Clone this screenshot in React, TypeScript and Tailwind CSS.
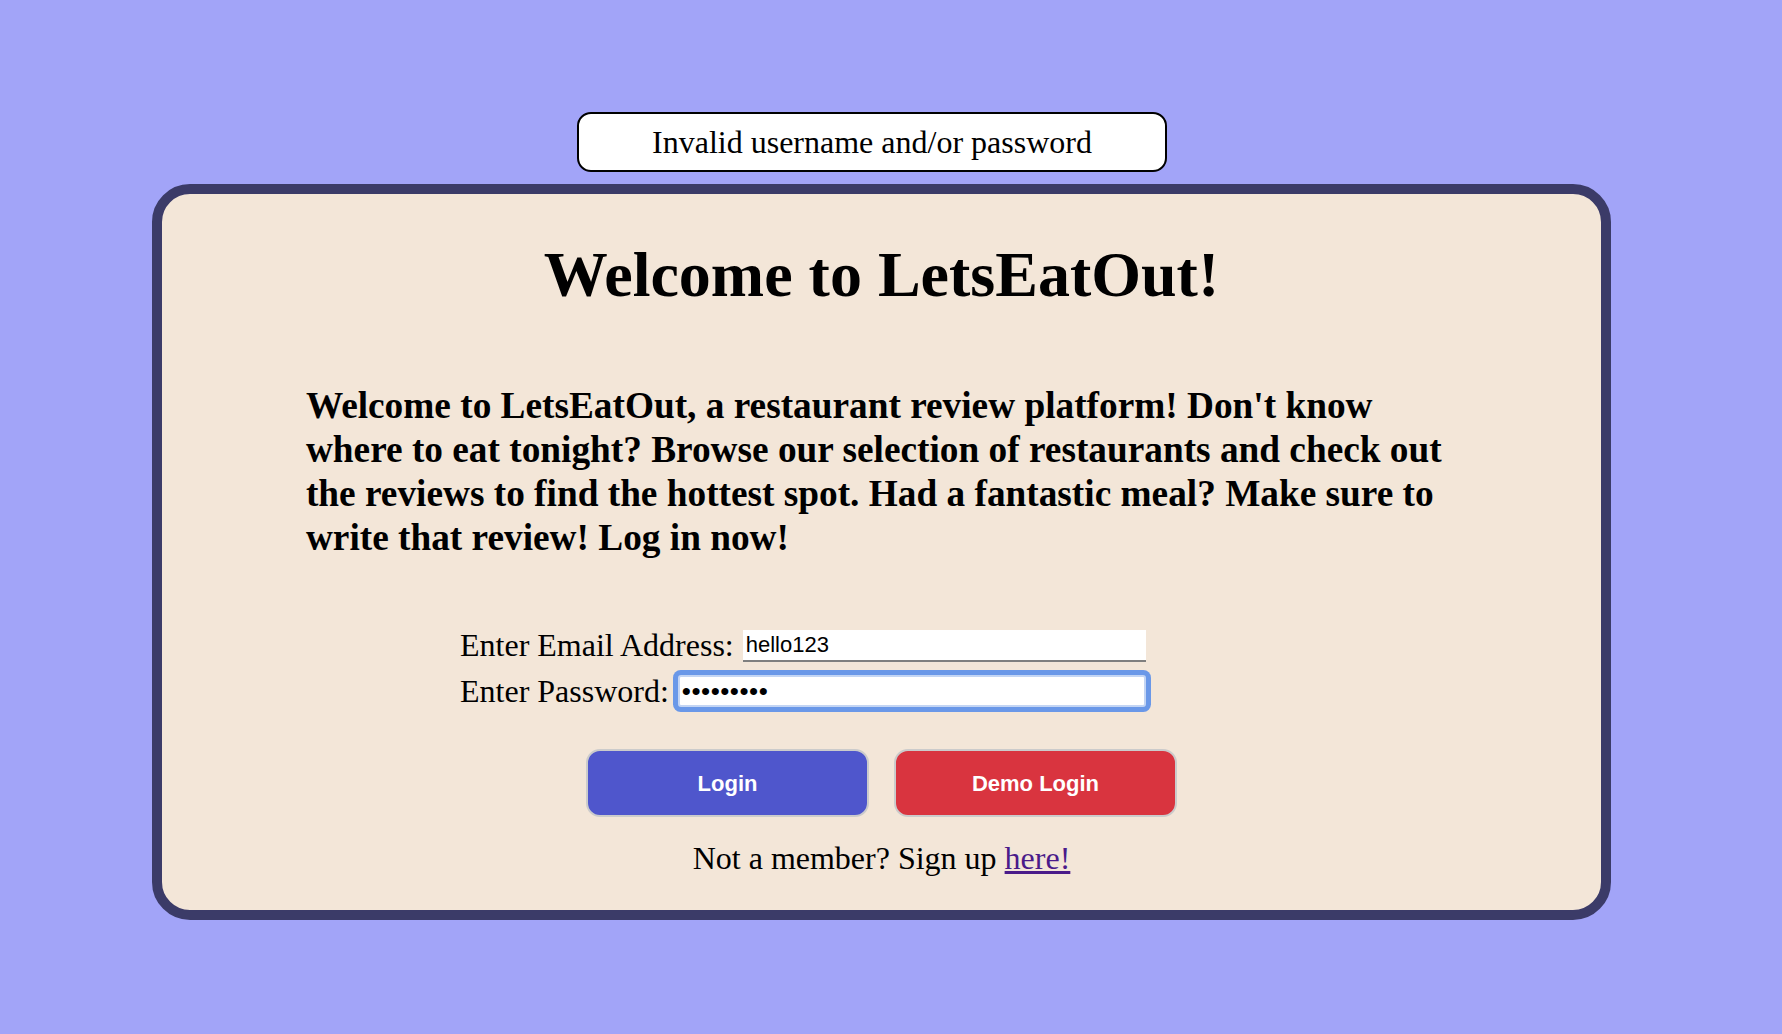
import React from 'react';

const serif = "font-['Liberation_Serif','Times_New_Roman',serif]";
const sans = "font-['Liberation_Sans',Arial,sans-serif]";

const App = () => {
  const [email, setEmail] = React.useState("hello123");
  const [password, setPassword] = React.useState("123456789");

  return (
    <div className={`min-h-screen w-full bg-[#a2a4f8] text-black ${serif}`}>
      <div className="flex flex-col items-center w-[1763px] pt-[112px] pb-[116px]">
        <div className="flex items-center justify-center w-[590px] h-[60px] mr-[19px] bg-white border-2 border-black rounded-[14px] text-[32px] leading-[37px]">
          Invalid username and/or password
        </div>

        <div className="flex flex-col w-[1459px] mt-[12px] bg-[#f3e6d8] border-[10px] border-[#3b3b68] rounded-[38px]">
          <h1 className="mt-[44px] text-center text-[64px] leading-[74px] font-bold">
            Welcome to LetsEatOut!
          </h1>

          <p className="w-[80%] mx-auto mt-[72px] text-[37.3px] leading-[44px] font-bold">
            Welcome to LetsEatOut, a restaurant review platform! Don't know
            where to eat tonight? Browse our selection of restaurants and check
            out the reviews to find the hottest spot. Had a fantastic meal? Make
            sure to write that review! Log in now!
          </p>

          <form
            className="flex flex-col gap-[7px] w-[686px] ml-[298px] mt-[67px]"
            onSubmit={(e) => e.preventDefault()}
          >
            <label className="flex items-center h-[37px] text-[32px] leading-[37px]">
              <span>Enter Email Address:</span>
              <input
                type="text"
                value={email}
                onChange={(e) => setEmail(e.target.value)}
                className={`flex-1 ml-[9px] h-[32px] px-[3px] bg-white border-b-2 border-[#7f7f7f] outline-none text-[22px] leading-[30px] ${sans}`}
              />
            </label>
            <label className="flex items-center h-[40px] text-[32px] leading-[37px]">
              <span>Enter Password:</span>
              <input
                type="password"
                value={password}
                autoFocus
                onChange={(e) => setPassword(e.target.value)}
                className={`flex-1 ml-[9px] h-[32px] px-[2px] bg-white border-2 border-[#c3d5f4] rounded-[3px] outline-none ring-[5px] ring-[#6a98e8] text-[26px] tracking-[0.5px] ${sans}`}
              />
            </label>
          </form>

          <div className="flex justify-center gap-[25px] mt-[38px]">
            <button
              type="button"
              className={`w-[283px] h-[68px] bg-[#4f56cc] border-2 border-[#cbcbcb] rounded-[14px] text-white text-[22px] font-bold ${sans}`}
            >
              Login
            </button>
            <button
              type="button"
              className={`w-[283px] h-[68px] bg-[#d9343f] border-2 border-[#cbcbcb] rounded-[14px] text-white text-[22px] font-bold ${sans}`}
            >
              Demo Login
            </button>
          </div>

          <div className="mt-[23px] mb-[33px] text-center text-[32px] leading-[37px]">
            Not a member? Sign up{" "}
            <a href="#" className="text-[#4a1b8a] underline">
              here!
            </a>
          </div>
        </div>
      </div>
    </div>
  );
};

export default App;
